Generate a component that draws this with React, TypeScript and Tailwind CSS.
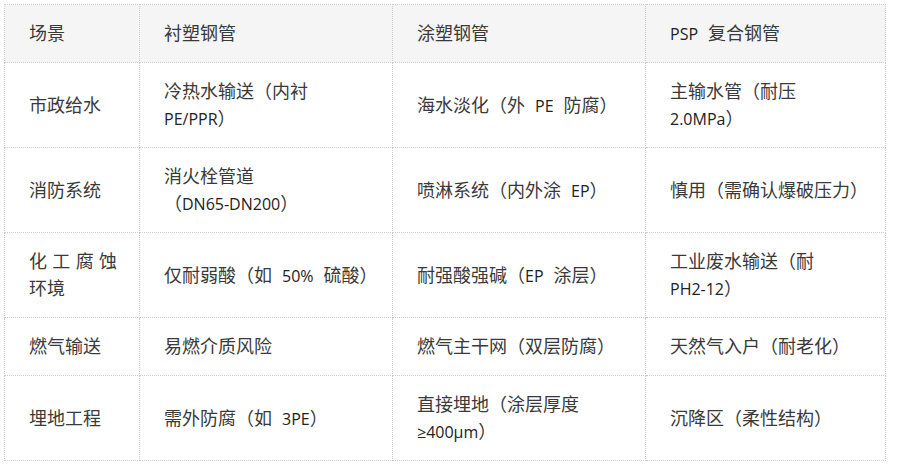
import React, { Fragment } from 'react';

// cell text: '\n' = line break, latin runs are set smaller in Open Sans
const rows: string[][] = [
  ['市政给水', '冷热水输送（内衬\nPE/PPR）', '海水淡化（外 PE 防腐）', '主输水管（耐压\n2.0MPa）'],
  ['消防系统', '消火栓管道\n（DN65-DN200）', '喷淋系统（内外涂 EP）', '慎用（需确认爆破压力）'],
  ['化工腐蚀环境', '仅耐弱酸（如 50% 硫酸）', '耐强酸强碱（EP 涂层）', '工业废水输送（耐\nPH2-12）'],
  ['燃气输送', '易燃介质风险', '燃气主干网（双层防腐）', '天然气入户（耐老化）'],
  ['埋地工程', '需外防腐（如 3PE）', '直接埋地（涂层厚度\n≥400μm）', '沉降区（柔性结构）'],
];

const headers = ['场景', '衬塑钢管', '涂塑钢管', 'PSP 复合钢管'];

const renderLine = (line: string) =>
  line
    .split(/([A-Za-z0-9%./\-≥μ]+| )/)
    .filter(Boolean)
    .map((t, i) => {
      if (t === ' ') return <span key={i} className="inline-block w-[10px]" />;
      if (/[A-Za-z0-9%./\-≥μ]/.test(t))
        return (
          <span
            key={i}
            className="text-[16px] leading-none text-[#222]"
            style={{ fontFamily: '"Open Sans", "Noto Sans", sans-serif' }}
          >
            {t}
          </span>
        );
      return <Fragment key={i}>{t}</Fragment>;
    });

const Rich: React.FC<{ text: string }> = ({ text }) => (
  <>
    {text.split('\n').map((line, i) => (
      <Fragment key={i}>
        {i > 0 && <br />}
        {renderLine(line)}
      </Fragment>
    ))}
  </>
);

const cellCls = 'border border-dotted border-[#cdcdcd] px-6 py-[15px] align-middle whitespace-nowrap';

const App: React.FC = () => {
  return (
    <div
      className="min-h-screen bg-white pl-[4px] pt-[4px] text-[18px] leading-[27px] text-[#3a3a3a]"
      style={{ fontFamily: '"Open Sans", "Noto Sans CJK SC", sans-serif' }}
    >
      <table className="table-fixed border-collapse w-[881px] text-left">
        <colgroup>
          <col className="w-[135px]" />
          <col className="w-[253px]" />
          <col className="w-[253px]" />
          <col className="w-[240px]" />
        </colgroup>
        <thead>
          <tr className="bg-[#f5f5f5]">
            {headers.map((h) => (
              <th key={h} className={`${cellCls} font-normal`}>
                <Rich text={h} />
              </th>
            ))}
          </tr>
        </thead>
        <tbody>
          {rows.map((row, r) => (
            <tr key={r}>
              {row.map((cell, c) => (
                <td key={c} className={cellCls}>
                  {cell === '化工腐蚀环境' ? (
                    <div className="w-[88px]">
                      <div className="flex justify-between">
                        {['化', '工', '腐', '蚀'].map((ch) => (
                          <span key={ch}>{ch}</span>
                        ))}
                      </div>
                      <div>环境</div>
                    </div>
                  ) : (
                    <Rich text={cell} />
                  )}
                </td>
              ))}
            </tr>
          ))}
        </tbody>
      </table>
    </div>
  );
};

export default App;
